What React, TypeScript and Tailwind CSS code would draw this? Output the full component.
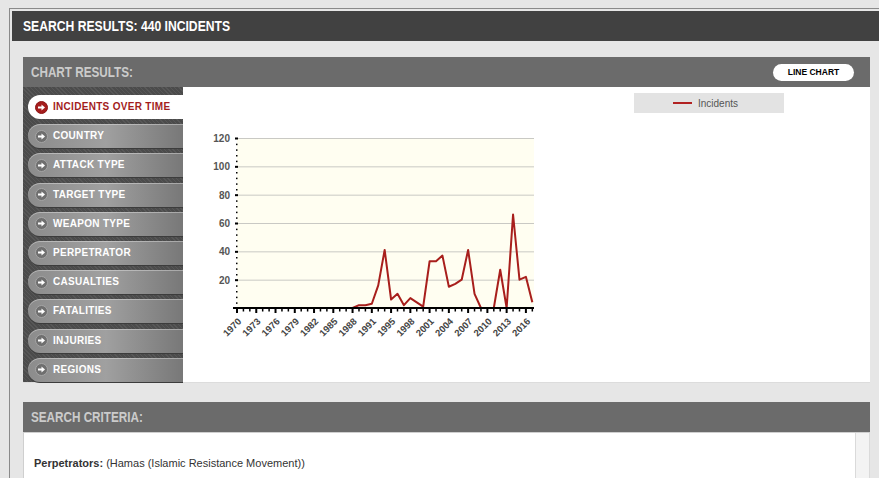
import React from 'react';

const MENU = [
  'INCIDENTS OVER TIME',
  'COUNTRY',
  'ATTACK TYPE',
  'TARGET TYPE',
  'WEAPON TYPE',
  'PERPETRATOR',
  'CASUALTIES',
  'FATALITIES',
  'INJURIES',
  'REGIONS',
];

// 1970..2017, GTD has no 1993
const DATA = [
  0, 0, 0, 0, 0, 0, 0, 0, 0, 0, 0, 0, 0, 0, 0, 0, 0, 0, 0, 2, 2, 3, 16, 41, 6, 10, 2, 7, 4, 1, 33, 33, 37, 15, 17,
  20, 41, 10, 0, 0, 0, 27, 0, 66, 20, 22, 4,
];
const LABELS = ['1970', '1973', '1976', '1979', '1982', '1985', '1988', '1991', '1995', '1998', '2001', '2004', '2007', '2010', '2013', '2016'];

const X0 = 54;
const DX = 6.42;
const Y0 = 221;
const YS = 170 / 120;

function ArrowIcon({ active }: { active: boolean }) {
  return (
    <svg width="13" height="13" viewBox="0 0 13 13" className="shrink-0">
      <circle cx="6.5" cy="6.5" r="6" fill={active ? '#a51d1d' : '#6f6f6f'} stroke={active ? '#8c1515' : '#a5a5a5'} strokeWidth="1" />
      <rect x="3" y="5.5" width="4" height="2" fill="#fff" />
      <path d="M6.5 3.5 L10 6.5 L6.5 9.5 Z" fill="#fff" />
    </svg>
  );
}

function Sidebar() {
  return (
    <div className="w-[160px] shrink-0 flex flex-col gap-[5.2px] pt-[8px] pl-[5px] bg-[repeating-linear-gradient(45deg,#575757_0,#575757_1px,#4b4b4b_1px,#4b4b4b_3px)]">
      {MENU.map((label, i) => {
        const active = i === 0;
        return (
          <div
            key={label}
            className={
              active
                ? 'h-[24px] flex items-center gap-[5px] pl-[7px] rounded-l-full bg-white text-[#a31d1d]'
                : 'h-[24px] flex items-center gap-[5px] pl-[7px] rounded-l-full bg-gradient-to-r from-[#8c8c8c] via-[#a0a0a0] to-[#787878] text-white shadow-[inset_0_1px_0_rgba(255,255,255,0.35),0_1px_0_#3c3c3c]'
            }
          >
            <ArrowIcon active={active} />
            <span className="text-[10px] font-bold tracking-[0.3px] leading-none">{label}</span>
          </div>
        );
      })}
    </div>
  );
}

function Chart() {
  const points = DATA.map((v, i) => `${X0 + i * DX},${Y0 - v * YS}`).join(' ');
  const minor: number[] = [];
  for (let v = 4; v < 120; v += 4) if (v % 20 !== 0) minor.push(v);

  return (
    <svg width="684" height="296" className="font-['Liberation_Sans',Arial,sans-serif]">
      {/* legend */}
      <rect x="451" y="6" width="150" height="20" fill="#e3e3e3" />
      <line x1="490" y1="16" x2="509" y2="16" stroke="#b22222" strokeWidth="2" />
      <text x="515" y="19.5" fontSize="10" fill="#555">Incidents</text>

      {/* plot */}
      <rect x={X0} y={51} width={297} height={170} fill="#fffef1" />
      {[20, 40, 60, 80, 100, 120].map((v) => (
        <line key={v} x1={X0 + 1} x2={351} y1={Y0 - v * YS + 0.5} y2={Y0 - v * YS + 0.5} stroke="#c9c9c4" strokeWidth="1" />
      ))}
      {[20, 40, 60, 80, 100, 120].map((v) => (
        <g key={v}>
          <rect x={52} y={Y0 - v * YS - 0.5} width={3} height={2} fill="#000" />
          <text x={47} y={Y0 - v * YS + 4} fontSize="10" fontWeight="bold" fill="#555" textAnchor="end">
            {v}
          </text>
        </g>
      ))}
      {minor.map((v) => (
        <rect key={v} x={53} y={Y0 - v * YS} width={1.5} height={1.5} fill="#000" />
      ))}

      <polyline points={points} fill="none" stroke="#a81f1c" strokeWidth="2" strokeLinejoin="round" />

      {/* x axis */}
      <rect x={50} y={220} width={301} height={2} fill="#000" />
      {DATA.map((_, i) => {
        const x = X0 + i * DX;
        const major = i % 3 === 0;
        return <rect key={i} x={x - (major ? 1 : 0.75)} y={222} width={major ? 2 : 1.5} height={major ? 4 : 2.5} fill="#000" />;
      })}
      {LABELS.map((l, k) => {
        const x = X0 + k * 3 * DX + 5;
        const y = 235;
        return (
          <text key={l} x={x} y={y} fontSize="9.5" fontWeight="bold" fill="#444" textAnchor="end" transform={`rotate(-45 ${x} ${y})`}>
            {l}
          </text>
        );
      })}
    </svg>
  );
}

function PanelHeader({ title, children }: { title: string; children?: React.ReactNode }) {
  return (
    <div className="h-[30px] bg-[#6b6b6b] flex items-center justify-between pl-[8px] pr-[16px]">
      <span className="inline-block origin-left scale-x-[0.78] text-[15px] font-bold text-[#cbcbcb] whitespace-nowrap">{title}</span>
      {children}
    </div>
  );
}

export default function App() {
  return (
    <div className="w-[879px] h-[478px] overflow-hidden bg-[#e6e6e6] pl-[9px] pt-[8px] font-['Liberation_Sans',Arial,sans-serif]">
      <div className="h-full border-l border-t border-[#8a8a8a] pl-[2px] pt-[2px]">
        <div className="h-[30px] bg-[#414141] flex items-center pl-[11px]">
          <span className="inline-block origin-left scale-x-[0.81] text-[15px] font-bold text-white whitespace-nowrap">
            SEARCH RESULTS: 440 INCIDENTS
          </span>
        </div>

        <div className="pl-[11px] pt-[16px] w-[858px]">
          <PanelHeader title="CHART RESULTS:">
            <button className="w-[81px] h-[17px] rounded-full bg-white text-black text-[8.5px] font-bold leading-none">
              LINE CHART
            </button>
          </PanelHeader>
          <div className="h-[296px] flex bg-white border-b border-[#dcdcdc]">
            <Sidebar />
            <div className="flex-1">
              <Chart />
            </div>
          </div>

          <div className="mt-[19px]">
            <PanelHeader title="SEARCH CRITERIA:" />
            <div className="flex border-t border-l border-[#cfcfcf] h-[60px]">
              <div className="flex-1 bg-white pl-[10px] pt-[22px] text-[11px] text-[#333]">
                <span className="font-bold">Perpetrators:</span> (Hamas (Islamic Resistance Movement))
              </div>
              <div className="w-[15px] bg-[#f3f3f3] border-l border-r border-[#dadada]" />
            </div>
          </div>
        </div>
      </div>
    </div>
  );
}
